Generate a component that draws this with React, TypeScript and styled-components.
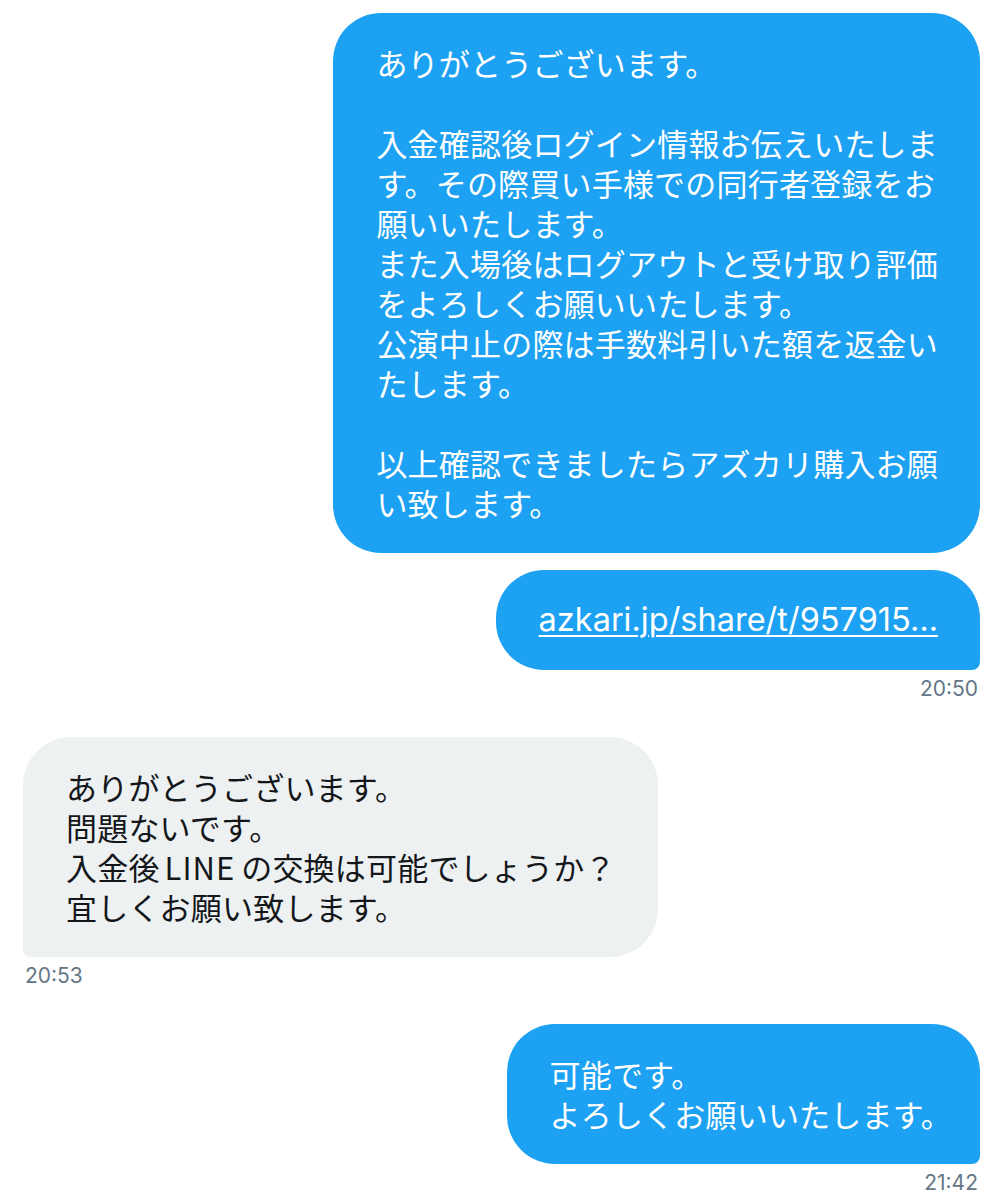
import { ReactNode } from "react";
import styled, { createGlobalStyle } from "styled-components";

const GlobalStyle = createGlobalStyle`
  body {
    margin: 0;
    background: #ffffff;
    font-family: Inter, "Noto Sans CJK JP", sans-serif;
  }
`;

const Thread = styled.div`
  display: flex;
  flex-direction: column;
  gap: 35px;
  padding: 13px 23px 0 23px;
`;

const MessageGroup = styled.div<{ $mine: boolean }>`
  display: flex;
  flex-direction: column;
  align-items: ${(p) => (p.$mine ? "flex-end" : "flex-start")};
  gap: 17px;
`;

const Bubble = styled.div<{ $mine: boolean; $last: boolean; $tight: boolean }>`
  box-sizing: border-box;
  padding: 30px ${(p) => (p.$tight ? "28px" : "42px")} 30px 43px;
  border-radius: 48px;
  ${(p) =>
    p.$last &&
    (p.$mine ? "border-bottom-right-radius: 8px;" : "border-bottom-left-radius: 8px;")}
  background: ${(p) => (p.$mine ? "#1da1f2" : "#eef1f2")};
  color: ${(p) => (p.$mine ? "#ffffff" : "#14171a")};
  font-family: "Noto Sans CJK JP", sans-serif;
  font-size: 31px;
  line-height: 40px;
  letter-spacing: 0.2px;
  white-space: nowrap;
`;

const Line = styled.div``;

const Latin = styled.span`
  margin: 0 6px 0 5px;
  letter-spacing: 1px;
`;

const LinkText = styled.a`
  display: block;
  color: #ffffff;
  font-family: Inter, "Noto Sans CJK JP", sans-serif;
  font-size: 32.5px;
  letter-spacing: 0;
  text-decoration: underline;
  text-decoration-thickness: 2px;
  text-underline-offset: 4px;
`;

const Time = styled.div`
  margin-top: -11px;
  font-size: 21px;
  line-height: 26px;
  color: #657786;
  padding: 0 2px;
`;

interface Message {
  id: string;
  lines: ReactNode[];
  link?: boolean;
  tight?: boolean;
}

interface Group {
  mine: boolean;
  time: string;
  messages: Message[];
}

const groups: Group[] = [
  {
    mine: true,
    time: "20:50",
    messages: [
      {
        id: "m1",
        lines: [
          "ありがとうございます。",
          "",
          "入金確認後ログイン情報お伝えいたしま",
          "す。その際買い手様での同行者登録をお",
          "願いいたします。",
          "また入場後はログアウトと受け取り評価",
          "をよろしくお願いいたします。",
          "公演中止の際は手数料引いた額を返金い",
          "たします。",
          "",
          "以上確認できましたらアズカリ購入お願",
          "い致します。",
        ],
      },
      { id: "m2", lines: ["azkari.jp/share/t/957915…"], link: true },
    ],
  },
  {
    mine: false,
    time: "20:53",
    messages: [
      {
        id: "m3",
        lines: [
          "ありがとうございます。",
          "問題ないです。",
          <>
            入金後<Latin>LINE</Latin>の交換は可能でしょうか？
          </>,
          "宜しくお願い致します。",
        ],
      },
    ],
  },
  {
    mine: true,
    time: "21:42",
    messages: [
      { id: "m4", lines: ["可能です。", "よろしくお願いいたします。"], tight: true },
    ],
  },
];

const App = () => {
  return (
    <>
      <GlobalStyle />
      <Thread>
        {groups.map((group) => (
          <MessageGroup key={group.time} $mine={group.mine}>
            {group.messages.map((msg, i) => (
              <Bubble
                key={msg.id}
                $mine={group.mine}
                $last={i === group.messages.length - 1}
                $tight={!!msg.tight}
              >
                {msg.link ? (
                  <LinkText href="#">{msg.lines[0]}</LinkText>
                ) : (
                  msg.lines.map((line, j) => (
                    <Line key={j}>{line || "\u00a0"}</Line>
                  ))
                )}
              </Bubble>
            ))}
            <Time>{group.time}</Time>
          </MessageGroup>
        ))}
      </Thread>
    </>
  );
};

export default App;
